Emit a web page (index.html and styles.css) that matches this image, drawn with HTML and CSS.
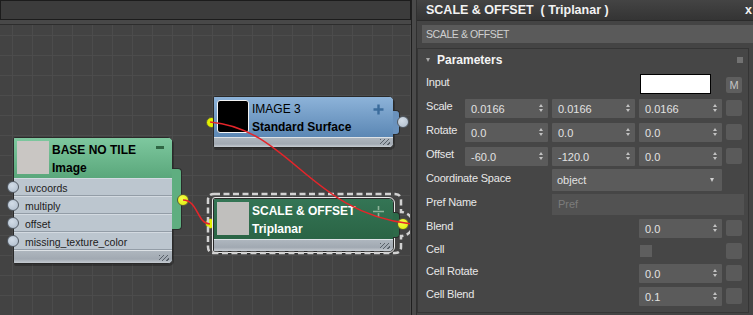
FILE: index.html
```html
<!DOCTYPE html>
<html>

<head>
  <title>Slate Material Editor</title>
  <link rel="stylesheet" href="styles.css">
</head>

<body>
  <div class="app">
    <div class="graph">
      <div class="graph-bar"></div>
      <div class="graph-strip"></div>
      <div class="canvas">
        <span class="socket stub stub-image"></span>
        <span class="socket stub stub-scale"></span>

        <div class="node node-base">
          <div class="node-head">
            <div class="thumb"></div>
            <div class="titles">
              <div>BASE NO TILE</div>
              <div>Image</div>
            </div>
            <span class="collapse"></span>
          </div>
          <ul class="ports">
            <li><span class="socket port"></span>uvcoords</li>
            <li><span class="socket port"></span>multiply</li>
            <li><span class="socket port"></span>offset</li>
            <li><span class="socket port"></span>missing_texture_color</li>
          </ul>
          <div class="node-foot"></div>
          <span class="out-tab"></span>
          <span class="socket yellow out"></span>
        </div>

        <div class="node node-image">
          <div class="node-head">
            <div class="thumb"></div>
            <div class="titles">
              <div class="light">IMAGE 3</div>
              <div>Standard Surface</div>
            </div>
            <svg class="expand" width="11" height="11" viewBox="0 0 11 11">
              <path d="M5.5 0.5V10.5M0.5 5.5H10.5" stroke="#3b6c9c" stroke-width="2.4" />
            </svg>
          </div>
          <div class="node-foot"></div>
          <span class="out-tab"></span>
          <span class="socket out"></span>
        </div>

        <div class="node node-scale">
          <div class="node-head">
            <div class="thumb"></div>
            <div class="titles">
              <div>SCALE &amp; OFFSET</div>
              <div>Triplanar</div>
            </div>
            <svg class="expand" width="11" height="11" viewBox="0 0 11 11">
              <path d="M5.5 0V4M5.5 7V11M0 5.5H11" stroke="#8fb39a" stroke-width="1.6" />
            </svg>
          </div>
          <div class="node-foot"></div>
          <span class="out-tab"></span>
          <span class="socket yellow out"></span>
        </div>

        <svg class="wires" width="411" height="290" viewBox="0 25 411 290">
          <path d="M214,194 H395 Q401,194 401,200 V212 A12 12 0 0 1 401,236 V247 Q401,253 395,253 H214 Q208,253 208,247 V200 Q208,194 214,194 Z" fill="none" stroke="#d2d2d2" stroke-width="2.5" stroke-dasharray="6 3.5" />
          <path d="M183,200 C198,200 197,224 210,224" fill="none" stroke="#e5252a" stroke-width="1.6" />
          <path d="M210,122 C290,129 310,213 412,224" fill="none" stroke="#e5252a" stroke-width="1.6" />
        </svg>
      </div>
    </div>

    <div class="gutter"></div>

    <div class="panel">
      <div class="panel-title">SCALE &amp; OFFSET  ( Triplanar )<span class="close">x</span></div>
      <div class="name-field">SCALE &amp; OFFSET</div>
      <div class="rollout">
        <div class="rollout-head"><span class="tri"></span>Parameters<span class="grip"></span></div>
        <div class="params">
          <div class="label c1">Input</div>
          <div class="swatch c4"></div>
          <div class="map-btn c5">M</div>

          <div class="label c1">Scale</div>
          <div class="spin c2">0.0166</div>
          <div class="spin c3">0.0166</div>
          <div class="spin c4">0.0166</div>
          <div class="chk c5"></div>

          <div class="label c1">Rotate</div>
          <div class="spin c2">0.0</div>
          <div class="spin c3">0.0</div>
          <div class="spin c4">0.0</div>
          <div class="chk c5"></div>

          <div class="label c1">Offset</div>
          <div class="spin c2">-60.0</div>
          <div class="spin c3">-120.0</div>
          <div class="spin c4">0.0</div>
          <div class="chk c5"></div>

          <div class="label wide">Coordinate Space</div>
          <div class="dropdown c34">object</div>

          <div class="label wide">Pref Name</div>
          <div class="text-field c3end">Pref</div>

          <div class="label wide">Blend</div>
          <div class="spin c4">0.0</div>
          <div class="chk c5"></div>

          <div class="label wide">Cell</div>
          <div class="small-chk c4"></div>
          <div class="chk c5"></div>

          <div class="label wide">Cell Rotate</div>
          <div class="spin c4">0.0</div>
          <div class="chk c5"></div>

          <div class="label wide">Cell Blend</div>
          <div class="spin c4">0.1</div>
          <div class="chk c5"></div>
        </div>
      </div>
    </div>
  </div>
</body>

</html>
```

FILE: styles.css
```css
* {
  box-sizing: border-box;
}
body {
  margin: 0;
  background: #3a3a3a;
  font-family: "Liberation Sans", Arial, sans-serif;
}
.app {
  display: flex;
  width: 753px;
  height: 315px;
  overflow: hidden;
}

/* node graph */
.graph {
  width: 412px;
  flex: none;
  display: flex;
  flex-direction: column;
  border-right: 1px solid #1f1f1f;
}
.graph-bar {
  height: 20px;
  border: 1px solid #1c1c1c;
  background: #3c3c3c;
}
.graph-strip {
  height: 5px;
  background: #484848;
  border-bottom: 1px solid #2d2d2d;
}
.canvas {
  position: relative;
  flex: 1;
  overflow: hidden;
  border-right: 1px solid #4d4d4d;
  background-color: #434343;
  background-image: linear-gradient(to right, #4c4c4c 1px, transparent 1px), linear-gradient(to bottom, #4c4c4c 1px, transparent 1px);
  background-size: 20px 20px;
  background-position: 12px 0, 0 10px;
}
.wires {
  position: absolute;
  left: 0;
  top: 0;
  pointer-events: none;
}

.node {
  position: absolute;
  border: 1px solid #2a2a2a;
  border-radius: 2px 5px 5px 2px;
  background: #bcc6cf;
  box-shadow: 1px 2px 0 rgba(0, 0, 0, 0.25);
}
.node-base {
  left: 13px;
  top: 112px;
  width: 160px;
}
.node-image {
  left: 213px;
  top: 71px;
  width: 181px;
}
.node-scale {
  left: 213px;
  top: 173px;
  width: 181px;
  outline: 1px solid #e8e8e8;
  outline-offset: 0;
}
.node-head {
  position: relative;
  display: flex;
  height: 40px;
  padding: 3px;
  border-radius: 1px 4px 0 0;
}
.node-base .node-head {
  background: linear-gradient(#7ec89f, #5aa77b);
}
.node-image .node-head {
  background: linear-gradient(#8db3d9, #5b87b4);
}
.node-scale .node-head {
  background: linear-gradient(#347555, #2a6445);
}
.thumb {
  width: 32px;
  height: 33px;
  flex: none;
  background: #c9c6c3;
}
.node-image .thumb {
  background: #000;
  border: 1px solid #f4f4f4;
  border-radius: 3px;
}
.node-scale .thumb {
  background: #c0bfbd;
}
.titles {
  margin-left: 3px;
  font-size: 12px;
  font-weight: bold;
  line-height: 18px;
  color: #000;
  white-space: nowrap;
}
.titles .light {
  font-weight: normal;
}
.node-scale .titles {
  color: #fff;
}
.collapse {
  position: absolute;
  right: 8px;
  top: 8px;
  width: 8px;
  height: 3px;
  background: #2f6644;
}
.expand {
  position: absolute;
  right: 9px;
  top: 7px;
}

.ports {
  margin: 0;
  padding: 0;
  list-style: none;
}
.ports li {
  position: relative;
  height: 18px;
  padding-left: 11px;
  line-height: 18px;
  font-size: 10.5px;
  color: #1c1c1c;
  border-top: 1px solid #d3dae1;
  border-bottom: 1px solid #939da7;
}
.node-foot {
  position: relative;
  height: 12px;
  border-radius: 0 0 4px 1px;
  background: linear-gradient(#dde2e6 0, #dde2e6 1px, #aeb6be 1px, #a1a9b2 70%, #c6ccd2 100%);
}
.node-base .node-foot {
  height: 13px;
}
.node-image .node-foot {
  height: 10px;
}
.node-foot::after {
  content: "";
  position: absolute;
  right: 3px;
  bottom: 2px;
  width: 10px;
  height: 6px;
  background: repeating-linear-gradient(135deg, #59616a 0 1px, transparent 1px 3px);
}

.out-tab {
  position: absolute;
  border: 1px solid #2a2a2a;
  border-left: none;
  border-radius: 0 4px 4px 0;
}
.node-base .out-tab {
  left: 158px;
  top: 30px;
  width: 10px;
  height: 62px;
  background: #5fae80;
}
.node-image .out-tab {
  left: 179px;
  top: 13px;
  width: 7px;
  height: 25px;
  background: #6a92bd;
}
.node-scale .out-tab {
  left: 179px;
  top: 13px;
  width: 7px;
  height: 26px;
  background: #2d6a49;
}

.socket {
  position: absolute;
  width: 12px;
  height: 12px;
  border-radius: 50%;
  border: 1px solid #525a63;
  background: radial-gradient(circle at 40% 35%, #d2dce7, #aebccb);
}
.socket.port {
  left: -7px;
  top: 2px;
}
.socket.yellow {
  border-color: #5a5a3a;
  background: radial-gradient(circle at 40% 35%, #f4ff4a, #dcec00);
}
.node-base .out {
  left: 163px;
  top: 56px;
}
.node-image .out,
.node-scale .out {
  left: 183px;
  top: 19px;
}
.stub {
  width: 11px;
  height: 11px;
  border-color: #5a5a3a;
  background: #e2f000;
}
.stub-image {
  left: 206px;
  top: 92px;
}
.stub-scale {
  left: 205px;
  top: 193px;
}

.gutter {
  width: 4px;
  flex: none;
  background: #4a4a4a;
}

/* parameter panel */
.panel {
  flex: 1;
  display: flex;
  flex-direction: column;
  background: #444;
  border-left: 1px solid #303030;
  color: #e6e6e6;
  overflow: hidden;
}
.panel-title {
  display: flex;
  justify-content: space-between;
  height: 21px;
  padding-left: 9px;
  line-height: 21px;
  font-size: 12.5px;
  font-weight: bold;
  color: #f2f2f2;
  white-space: pre;
  background: linear-gradient(#444, #343434);
  border-bottom: 1px solid #2b2b2b;
}
.close {
  margin-right: 1px;
}
.name-field {
  height: 18px;
  margin: 4px 0 0 5px;
  padding-left: 4px;
  line-height: 18px;
  font-size: 10.5px;
  letter-spacing: -0.4px;
  color: #d0d0d0;
  background: #5a5a5a;
}
.rollout {
  flex: 1;
  margin: 5px 4px 2px 0;
  border: 1px solid #353535;
  background: #464646;
}
.rollout-head {
  display: flex;
  align-items: center;
  height: 23px;
  padding: 0 5px 1px 8px;
  font-size: 12px;
  font-weight: bold;
  color: #f4f4f4;
}
.tri {
  width: 0;
  height: 0;
  margin-right: 7px;
  border-left: 2.5px solid transparent;
  border-right: 2.5px solid transparent;
  border-top: 4px solid #a8a8a8;
}
.grip {
  width: 6px;
  height: 6px;
  margin-left: auto;
  background: radial-gradient(circle, #8a8a8a 0.6px, transparent 0.9px) 0 0 / 2px 2px;
}
.params {
  display: grid;
  grid-template-columns: 35px 83px 83px 83px 16px;
  grid-template-rows: repeat(7, 24px) 22px 22px 24px;
  column-gap: 4px;
  align-items: center;
  padding-left: 8px;
  font-size: 11px;
}
.c1 { grid-column: 1; }
.c2 { grid-column: 2; }
.c3 { grid-column: 3; }
.c4 { grid-column: 4; }
.c5 { grid-column: 5; }
.wide { grid-column: 1 / 3; }
.c34 { grid-column: 3 / 5; }
.c3end { grid-column: 3 / -1; }
.label {
  margin-bottom: 4px;
  font-size: 11px;
  letter-spacing: -0.2px;
  white-space: nowrap;
  color: #e8e8e8;
}
.swatch {
  width: 71px;
  height: 20px;
  margin-left: 1px;
  background: #fff;
  border: 1px solid #000;
}
.map-btn {
  height: 16px;
  margin-top: 2px;
  border-radius: 2px;
  background: #5e5e5e;
  color: #c4c4c4;
  font-size: 11px;
  line-height: 16px;
  text-align: center;
}
.spin {
  position: relative;
  height: 19px;
  padding-left: 6px;
  line-height: 20px;
  border-radius: 1px;
  background: #5b5b5b;
  color: #e2e2e2;
}
.spin::before,
.spin::after {
  content: "";
  position: absolute;
  right: 5px;
  border-left: 2.5px solid transparent;
  border-right: 2.5px solid transparent;
}
.spin::before {
  top: 5px;
  border-bottom: 3px solid #c2c2c2;
}
.spin::after {
  top: 10px;
  border-top: 3px solid #c2c2c2;
}
.chk {
  height: 16px;
  border-radius: 2px;
  background: #5a5a5a;
}
.small-chk {
  width: 12px;
  height: 12px;
  margin-left: 1px;
  background: #5e5e5e;
}
.dropdown {
  position: relative;
  height: 22px;
  padding-left: 5px;
  line-height: 22px;
  border-radius: 1px;
  background: #5b5b5b;
  color: #e2e2e2;
}
.dropdown::after {
  content: "";
  position: absolute;
  right: 8px;
  top: 9px;
  border-left: 2.5px solid transparent;
  border-right: 2.5px solid transparent;
  border-top: 4px solid #d0d0d0;
}
.text-field {
  height: 21px;
  margin-right: -2px;
  padding-left: 6px;
  line-height: 21px;
  background: #525252;
  color: #7c7c7c;
}
```
